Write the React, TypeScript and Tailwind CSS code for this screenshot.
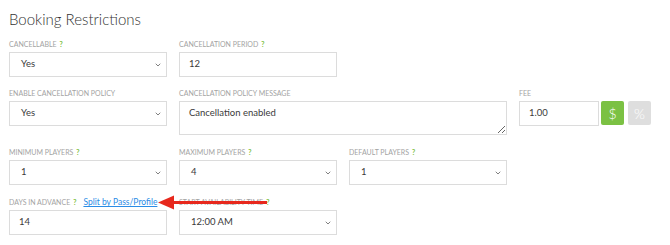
import { ChevronDown } from 'lucide-react'

function Help() {
  return <span className="font-bold text-[#7bc043] text-[7px]">?</span>
}

function Label({ text, help = true }: { text: string; help?: boolean }) {
  return (
    <div className="h-[12px] mb-[2px] flex items-center gap-[3px] text-[7px] leading-[12px] uppercase text-[#a3a3a3] whitespace-nowrap">
      <span>{text}</span>
      {help && <Help />}
    </div>
  )
}

function Select({ value }: { value: string }) {
  return (
    <div className="w-[158px] h-[25px] border border-[#dcdcdc] bg-white flex items-center justify-between pl-[11px] pr-[4px] text-[9.5px] text-[#3a3a3a]">
      <span>{value}</span>
      <ChevronDown className="h-[8px] w-[8px] text-[#666]" strokeWidth={2.5} />
    </div>
  )
}

function Input({ value, narrow = false }: { value: string; narrow?: boolean }) {
  return (
    <div
      className={`${narrow ? 'w-[80px]' : 'w-[158px]'} h-[25px] border border-[#dcdcdc] bg-white flex items-center pl-[9px] text-[9.5px] text-[#3a3a3a]`}
    >
      {value}
    </div>
  )
}

export default function App() {
  return (
    <div className="w-[670px] h-[245px] bg-white overflow-hidden pl-[9px] pt-[9px] font-['Lato','Noto_Sans',sans-serif]">
      <h2 className="text-[15px] leading-[20px] font-light text-[#333] mb-[9px]">Booking Restrictions</h2>

      {/* Row 1 */}
      <div className="flex gap-[12px] mb-[10px]">
        <div>
          <Label text="Cancellable" />
          <Select value="Yes" />
        </div>
        <div>
          <Label text="Cancellation Period" />
          <Input value="12" />
        </div>
      </div>

      {/* Row 2 */}
      <div className="flex gap-[12px] mb-[11px]">
        <div>
          <Label text="Enable Cancellation Policy" help={false} />
          <Select value="Yes" />
        </div>
        <div>
          <Label text="Cancellation Policy Message" help={false} />
          <textarea
            readOnly
            value="Cancellation enabled"
            className="block w-[328px] h-[34px] border border-[#dcdcdc] bg-white pl-[9px] pt-[5px] text-[9.5px] leading-[12px] text-[#3a3a3a] outline-none"
          />
        </div>
        <div>
          <Label text="Fee" help={false} />
          <div className="flex">
            <Input value="1.00" narrow />
            <div className="ml-[2px] w-[23px] h-[24px] bg-[#7bc143] rounded-[2px] flex items-center justify-center text-white text-[14px] font-light">$</div>
            <div className="ml-[4px] w-[23px] h-[24px] bg-[#dedede] rounded-[2px] flex items-center justify-center text-white text-[14px] font-light">%</div>
          </div>
        </div>
      </div>

      {/* Row 3 */}
      <div className="flex gap-[12px] mb-[11px]">
        <div>
          <Label text="Minimum Players" />
          <Select value="1" />
        </div>
        <div>
          <Label text="Maximum Players" />
          <Select value="4" />
        </div>
        <div>
          <Label text="Default Players" />
          <Select value="1" />
        </div>
      </div>

      {/* Row 4 */}
      <div className="relative flex gap-[12px]">
        <div>
          <div className="h-[12px] mb-[2px] flex items-center gap-[3px] text-[7px] leading-[12px] uppercase text-[#a3a3a3] whitespace-nowrap">
            <span>Days in Advance</span>
            <Help />
            <a className="ml-[4px] normal-case text-[8.5px] text-[#2a8ce6] underline">Split by Pass/Profile</a>
          </div>
          <Input value="14" />
        </div>
        <div>
          <Label text="Start Availability Time" />
          <Select value="12:00 AM" />
        </div>
        {/* red annotation arrow */}
        <svg className="absolute left-[149px] top-[-1px]" width="112" height="15" viewBox="0 0 112 15">
          <line x1="12" y1="7.5" x2="109" y2="7.5" stroke="#e7281d" strokeWidth="3" />
          <polygon points="0,7.5 16,0.5 16,14.5" fill="#e7281d" />
        </svg>
      </div>
    </div>
  )
}
